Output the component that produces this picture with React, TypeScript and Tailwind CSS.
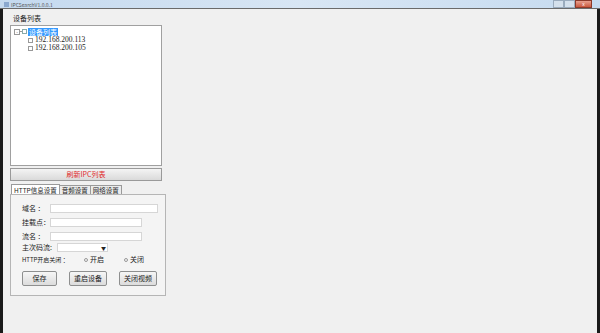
import React from 'react';

const cjk = { fontFamily: '"Noto Sans CJK SC", "Liberation Sans", sans-serif' };
const serif = { fontFamily: '"Liberation Serif", "Noto Sans CJK SC", serif' };

function Field({ label, width }: { label: string; width: string }) {
  return (
    <div className="flex items-center h-[9px]">
      <span className="w-[28px] text-[7px] leading-none text-[#222]">{label}</span>
      <div className={`${width} h-[9px] bg-white border border-[#d6d6d6]`} />
    </div>
  );
}

function Btn({ label, w }: { label: string; w: string }) {
  return (
    <div className={`${w} h-[15px] flex items-center justify-center border border-[#8e8f8f] rounded-[2px] bg-gradient-to-b from-[#f6f6f6] to-[#dcdcdc] text-[7px] text-[#222]`}>
      {label}
    </div>
  );
}

export default function App() {
  return (
    <div className="w-[600px] h-[333px] flex flex-col bg-[#f0f0f0] overflow-hidden" style={cjk}>
      {/* title bar */}
      <div className="h-[9px] flex items-center bg-gradient-to-r from-[#c4d9ef] via-[#d8e6f4] to-[#c6dbf0] border-b border-[#6b6b6b] pl-[4px] relative">
        <div className="w-[5px] h-[5px] bg-[#8aa8cf] mr-[2px]" />
        <span className="text-[5px] leading-none text-[#555]">IPCSearchV1.0.0.1</span>
        <div className="absolute right-[8px] top-0 flex h-[8px]">
          <div className="w-[11px] h-full bg-[#d4e0ec] border border-[#9aabbd]" />
          <div className="w-[11px] h-full bg-[#d4e0ec] border border-[#9aabbd]" />
          <div className="w-[17px] h-full bg-gradient-to-b from-[#e8a08f] to-[#c9573d] border border-[#8c3a2a] flex items-center justify-center text-white text-[5px]">x</div>
        </div>
      </div>

      <div className="flex-1 flex border-l-[3px] border-r-[3px] border-l-[#1a1a1a] border-r-[#1a1a1a]">
        <div className="pl-[7px] pt-[6px] flex flex-col">
          <div className="text-[7px] leading-none text-[#222] ml-[3px] mb-[3px]">设备列表</div>

          {/* tree */}
          <div className="w-[152px] h-[141px] bg-white border border-[#a0a0a0] pt-[1px] pl-[3px]">
            <div className="flex items-center h-[9px]">
              <div className="w-[6px] h-[6px] border border-[#999] text-[5px] leading-[4px] text-center text-[#444]">-</div>
              <div className="w-[2px] border-t border-dotted border-[#999]" />
              <div className="w-[5px] h-[5px] border border-[#8aa]" />
              <span className="ml-[1px] px-[1px] bg-[#3399ff] text-white text-[7px] leading-[8px]">设备列表</span>
            </div>
            {['192.168.200.113', '192.168.200.105'].map((ip) => (
              <div key={ip} className="flex items-center h-[8px] pl-[14px]">
                <div className="w-[5px] h-[5px] border border-[#999] mr-[2px]" />
                <span className="text-[7.5px] leading-none text-[#222]" style={serif}>{ip}</span>
              </div>
            ))}
          </div>

          {/* refresh */}
          <div className="mt-[2px] w-[152px] h-[13px] flex items-center justify-center border border-[#9a9a9a] bg-gradient-to-b from-[#f4f4f4] to-[#dadada] text-[7px] text-[#e02a2a]">
            刷新IPC列表
          </div>

          {/* tabs */}
          <div className="mt-[3px] flex items-end h-[10px] ml-[1px]">
            <div className="h-[10px] px-[2px] bg-white border border-b-0 border-[#9a9a9a] text-[6.5px] leading-[10px] text-[#222]">HTTP信息设置</div>
            <div className="h-[9px] px-[2px] bg-[#ececec] border border-b-0 border-l-0 border-[#9a9a9a] text-[6.5px] leading-[9px] text-[#222]">音频设置</div>
            <div className="h-[9px] px-[2px] bg-[#ececec] border border-b-0 border-l-0 border-[#9a9a9a] text-[6.5px] leading-[9px] text-[#222]">网络设置</div>
          </div>
          <div className="w-[156px] h-[102px] bg-[#f4f4f4] border border-[#b5b5b5] pl-[11px] pt-[9px] flex flex-col">
            <Field label="域名 ：" width="w-[108px]" />
            <div className="h-[5px]" />
            <Field label="挂载点：" width="w-[92px]" />
            <div className="h-[5px]" />
            <Field label="流名 ：" width="w-[92px]" />
            <div className="h-[2px]" />
            <div className="flex items-center h-[9px]">
              <span className="w-[35px] text-[7px] leading-none text-[#222]">主次码流:</span>
              <div className="w-[51px] h-[9px] bg-white border border-[#d6d6d6] flex items-center justify-end pr-[1px] text-[5px] text-[#222]">▼</div>
            </div>
            <div className="h-[3px]" />
            <div className="flex items-center h-[9px]">
              <span className="w-[62px] text-[6px] leading-none text-[#222]">HTTP开启关闭 ：</span>
              <span className="w-[4px] h-[4px] rounded-full border border-[#999] mr-[2px]" />
              <span className="text-[7px] leading-none text-[#222] w-[34px]">开启</span>
              <span className="w-[4px] h-[4px] rounded-full border border-[#999] mr-[2px]" />
              <span className="text-[7px] leading-none text-[#222]">关闭</span>
            </div>
            <div className="mt-[7px] flex gap-[12px]">
              <Btn label="保存" w="w-[35px]" />
              <Btn label="重启设备" w="w-[38px]" />
              <Btn label="关闭视频" w="w-[38px]" />
            </div>
          </div>
        </div>
      </div>
    </div>
  );
}
